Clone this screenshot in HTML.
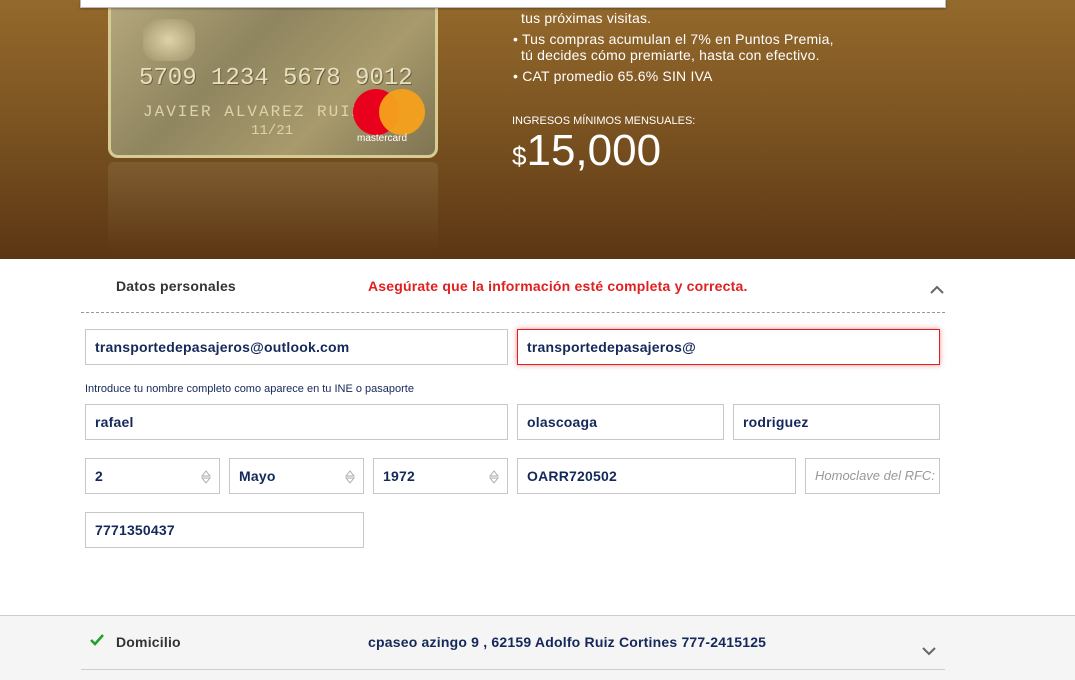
<!DOCTYPE html>
<html><head><meta charset="utf-8"><style>
*{box-sizing:border-box;margin:0;padding:0}
body{width:1075px;height:680px;overflow:hidden;font-family:"Liberation Sans",sans-serif;background:#fff;position:relative}
.banner{position:absolute;left:0;top:0;width:1075px;height:259px;background:linear-gradient(180deg,#94692c 0%,#7d5522 45%,#5c3614 100%)}
.topbar{position:absolute;left:80px;top:0;width:866px;height:8px;background:#fff;border:1px solid #bbb;border-top:none;box-shadow:0 1px 2px rgba(0,0,0,.3)}
.card{position:absolute;left:108px;top:-20px;width:330px;height:178px;border-radius:10px;background:linear-gradient(135deg,#b9ab80,#8f855f 40%,#a89a6c 70%,#7f7452);border:3px solid #d8cc95}
.refl{position:absolute;left:108px;top:162px;width:330px;height:90px;background:linear-gradient(180deg,rgba(150,130,90,.3),rgba(100,70,30,0));border-radius:6px}
.chip{position:absolute;left:32px;top:36px;width:52px;height:42px;border-radius:14px;background:radial-gradient(#ded4a8,#9c9068);}
.num{position:absolute;left:28px;top:82px;color:#e8e0c0;font:24px "Liberation Mono",monospace;letter-spacing:0px;text-shadow:1px 1px 0 #6a6040}
.name{position:absolute;left:32px;top:120px;color:#ddd2ac;font:16px "Liberation Mono",monospace;letter-spacing:2px}
.mc1{position:absolute;left:242px;top:106px;width:46px;height:46px;border-radius:50%;background:#e8001c}
.mc2{position:absolute;left:268px;top:106px;width:46px;height:46px;border-radius:50%;background:rgba(247,160,27,.95)}
.mct{position:absolute;left:246px;top:150px;color:#fff;font-size:10px}
.txt{position:absolute;color:#fff;font-size:14px;line-height:18px;letter-spacing:.2px}
.hdr{position:absolute;left:116px;top:278px;font-size:14px;font-weight:bold;color:#333;letter-spacing:.2px}
.warn{position:absolute;left:368px;top:278px;font-size:14px;font-weight:bold;color:#e02020;letter-spacing:.2px}
.dash{position:absolute;left:81px;top:312px;width:864px;border-top:1px dashed #999}
.in{position:absolute;height:36px;border:1px solid #c8c8c8;background:#fff;color:#14285a;font-weight:bold;font-size:14px;padding:0 9px;line-height:34px;white-space:nowrap;overflow:hidden;letter-spacing:.2px}
.in.err{border-color:#e02020;box-shadow:0 0 5px rgba(224,32,32,.5)}
.sp{position:absolute;right:8px;top:11px;width:10px;height:14px}
.note{position:absolute;left:85px;top:383px;font-size:11px;color:#14285a}
.dom{position:absolute;left:0;top:615px;width:1075px;height:65px;background:#f5f5f5;border-top:1px solid #ccc}
</style></head><body>
<div class="banner"></div>
<div class="refl"></div>
<div class="card"><div class="chip"></div><div class="num">5709 1234 5678 9012</div><div class="name">JAVIER ALVAREZ RUIZ</div><div style="position:absolute;left:140px;top:140px;color:#ddd2ac;font:14px 'Liberation Mono',monospace">11/21</div><div class="mc1"></div><div class="mc2"></div><div class="mct">mastercard</div></div>
<div class="topbar"></div>
<div class="txt" style="left:521px;top:9px">tus próximas visitas.</div>
<div class="txt" style="left:513px;top:30px">• Tus compras acumulan el 7% en Puntos Premia,</div>
<div class="txt" style="left:521px;top:46px">tú decides cómo premiarte, hasta con efectivo.</div>
<div class="txt" style="left:513px;top:67px">• CAT promedio 65.6% SIN IVA</div>
<div class="txt" style="left:512px;top:112px;font-size:11px;letter-spacing:0">INGRESOS MÍNIMOS MENSUALES:</div>
<div class="txt" style="left:512px;top:128px;font-size:44px;line-height:46px;letter-spacing:0"><span style="font-size:26px">$</span>15,000</div>
<div class="hdr">Datos personales</div>
<div class="warn">Asegúrate que la información esté completa y correcta.</div>
<svg style="position:absolute;left:929px;top:285px" width="16" height="10"><path d="M2 8 L8 2 L14 8" fill="none" stroke="#666" stroke-width="2"/></svg>
<div class="dash"></div>
<div class="in" style="left:85px;top:329px;width:423px">transportedepasajeros@outlook.com</div>
<div class="in err" style="left:517px;top:329px;width:423px">transportedepasajeros@</div>
<div class="note">Introduce tu nombre completo como aparece en tu INE o pasaporte</div>
<div class="in" style="left:85px;top:404px;width:423px">rafael</div>
<div class="in" style="left:517px;top:404px;width:207px">olascoaga</div>
<div class="in" style="left:733px;top:404px;width:207px">rodriguez</div>
<div class="in" style="left:85px;top:458px;width:135px">2<svg class="sp"><path d="M1 6 L5 1 L9 6 Z M1 8 L5 13 L9 8 Z" fill="none" stroke="#aaa"/></svg></div>
<div class="in" style="left:229px;top:458px;width:135px">Mayo<svg class="sp"><path d="M1 6 L5 1 L9 6 Z M1 8 L5 13 L9 8 Z" fill="none" stroke="#aaa"/></svg></div>
<div class="in" style="left:373px;top:458px;width:135px">1972<svg class="sp"><path d="M1 6 L5 1 L9 6 Z M1 8 L5 13 L9 8 Z" fill="none" stroke="#aaa"/></svg></div>
<div class="in" style="left:517px;top:458px;width:279px">OARR720502</div>
<div class="in" style="left:805px;top:458px;width:135px;font-weight:normal;font-style:italic;color:#999;font-size:13px;letter-spacing:0">Homoclave del RFC:</div>
<div class="in" style="left:85px;top:512px;width:279px">7771350437</div>
<div class="dom">
<svg style="position:absolute;left:89px;top:17px" width="16" height="14"><path d="M2 7 L6 11 L14 2" fill="none" stroke="#22a022" stroke-width="2.5"/></svg>
<div style="position:absolute;left:116px;top:18px;font-size:14px;font-weight:bold;color:#333;letter-spacing:.2px">Domicilio</div>
<div style="position:absolute;left:368px;top:18px;font-size:14px;font-weight:bold;color:#14285a;letter-spacing:.2px">cpaseo azingo 9 , 62159 Adolfo Ruiz Cortines 777-2415125</div>
<svg style="position:absolute;left:921px;top:30px" width="16" height="10"><path d="M2 2 L8 8 L14 2" fill="none" stroke="#666" stroke-width="2"/></svg>
<div style="position:absolute;left:81px;top:53px;width:864px;border-top:1px solid #ccc"></div>
</div>
</body></html>
